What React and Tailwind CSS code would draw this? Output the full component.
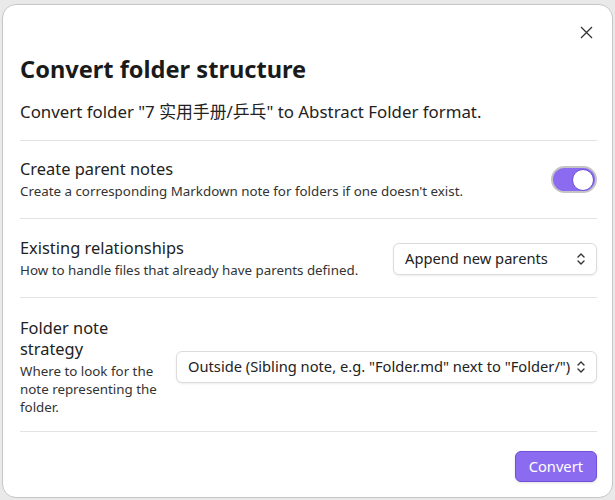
import React, { useState } from "react"

const font = { fontFamily: '"Segoe UI", "Noto Sans", "Noto Sans CJK SC", sans-serif' }

const Chevrons = () => (
  <svg width="10" height="14" viewBox="0 0 10 14" fill="none" stroke="#333" strokeWidth="1.4" strokeLinecap="round" strokeLinejoin="round">
    <path d="M2 5 L5 2 L8 5" />
    <path d="M2 9 L5 12 L8 9" />
  </svg>
)

const Select = ({ value, className }) => (
  <div className={"flex items-center justify-between h-[32px] pl-[11px] pr-[10px] border border-[#dcdcdc] rounded-[6px] bg-white shadow-[0_1px_2px_rgba(0,0,0,0.08)] text-[14.7px] text-[#222] " + className}>
    <span className="whitespace-nowrap">{value}</span>
    <Chevrons />
  </div>
)

const App = () => {
  const [on, setOn] = useState(true)
  return (
    <div className="w-[615px] h-[500px] bg-[#e9e9e9] pt-[4px] pl-[2px] pr-[2px]" style={font}>
      <div className="h-[494px] bg-white border border-[#c6c6c6] rounded-[14px] pl-[17px] pr-[15px] pt-[21px] text-[#222]">
        <div className="flex justify-end pr-[4px]">
          <svg width="13" height="13" viewBox="0 0 13 13" stroke="#333" strokeWidth="1.3">
            <path d="M1 1 L12 12 M12 1 L1 12" />
          </svg>
        </div>
        <h1 className="mt-[15px] text-[23.6px] font-bold leading-[30px] text-[#1a1a1a]">Convert folder structure</h1>
        <p className="mt-[17px] text-[16.85px] leading-[22px]">Convert folder "7 实用手册/乒乓" to Abstract Folder format.</p>
        <div className="mt-[17px] border-t border-[#e3e3e3]" />

        <div className="flex items-center justify-between py-[17px]">
          <div>
            <div className="text-[16.4px] leading-[22px]">Create parent notes</div>
            <div className="text-[13.35px] leading-[20px] text-[#333] mt-[1px]">Create a corresponding Markdown note for folders if one doesn't exist.</div>
          </div>
          <button onClick={() => setOn(!on)} className={"w-[46px] h-[27px] rounded-full border-2 border-[#c4c4c4] flex items-center p-[1px] " + (on ? "bg-[#8b6cf0] justify-end" : "bg-[#ddd] justify-start")}>
            <span className="w-[22px] h-[22px] rounded-full bg-white border border-[#6a4fd8]" />
          </button>
        </div>
        <div className="border-t border-[#e3e3e3]" />

        <div className="flex items-center justify-between pt-[18px] pb-[17px]">
          <div>
            <div className="text-[16.4px] leading-[22px]">Existing relationships</div>
            <div className="text-[13.35px] leading-[20px] text-[#333] mt-[1px]">How to handle files that already have parents defined.</div>
          </div>
          <Select value="Append new parents" className="w-[204px]" />
        </div>
        <div className="border-t border-[#e3e3e3]" />

        <div className="flex items-center justify-between pt-[19px] pb-[15px]">
          <div className="w-[145px]">
            <div className="text-[16.4px] leading-[21px]">Folder note strategy</div>
            <div className="text-[13.35px] leading-[18px] text-[#333] mt-[3px]">Where to look for the note representing the folder.</div>
          </div>
          <Select value={'Outside (Sibling note, e.g. "Folder.md" next to "Folder/")'} className="w-[421px]" />
        </div>
        <div className="border-t border-[#e3e3e3]" />

        <div className="flex justify-end mt-[19px]">
          <button className="h-[31px] px-[13px] rounded-[6px] bg-[#8b6cf0] text-white text-[14.7px] border border-[#6f52d9] shadow-sm">Convert</button>
        </div>
      </div>
    </div>
  )
}

export default App
